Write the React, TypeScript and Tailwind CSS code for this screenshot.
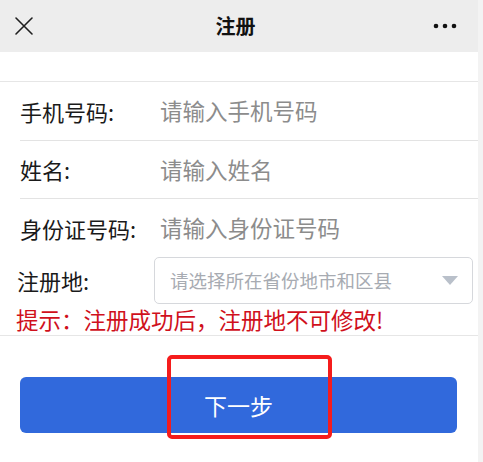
const font = { fontFamily: '"Noto Sans CJK SC", "Noto Sans", sans-serif' };

function CloseIcon() {
  return (
    <svg width="20" height="20" viewBox="0 0 20 20" fill="none">
      <path d="M2 2 L18 18 M18 2 L2 18" stroke="#1f1f1f" strokeWidth="1.6" strokeLinecap="round" />
    </svg>
  );
}

function MoreIcon() {
  return (
    <svg width="24" height="8" viewBox="0 0 24 8" fill="#111">
      <circle cx="3" cy="4" r="2.3" />
      <circle cx="12" cy="4" r="2.3" />
      <circle cx="21" cy="4" r="2.3" />
    </svg>
  );
}

interface FieldRowProps {
  label: string;
  placeholder: string;
  className: string;
}

function FieldRow({ label, placeholder, className }: FieldRowProps) {
  return (
    <div className={"ml-5 flex items-center " + className}>
      <span className="w-[140px] shrink-0 text-[22px] text-[#1a1a1a]">{label}</span>
      <input
        className="w-full bg-transparent text-[22.5px] text-[#1a1a1a] outline-none placeholder:text-[#8c8c8c]"
        placeholder={placeholder}
        style={font}
      />
    </div>
  );
}

export default function App() {
  return (
    <div className="flex h-[462px] w-[483px] overflow-hidden bg-white" style={font}>
      <div className="w-[478px] shrink-0">
        <div className="grid h-[52px] grid-cols-[1fr_auto_1fr] items-center bg-[#ededed] pl-[14px] pr-[21px]">
          <CloseIcon />
          <span className="text-[20px] font-semibold text-[#111]">注册</span>
          <div className="flex justify-end">
            <MoreIcon />
          </div>
        </div>
        <div className="h-[30px] border-b border-[#e6e6e6]" />

        <FieldRow label="手机号码:" placeholder="请输入手机号码" className="h-[59px] border-b border-[#e3e3e3]" />
        <FieldRow label="姓名:" placeholder="请输入姓名" className="h-[58px] border-b border-[#e3e3e3]" />
        <FieldRow label="身份证号码:" placeholder="请输入身份证号码" className="h-[58px]" />

        <div className="flex items-center pl-[17px]">
          <span className="w-[137px] shrink-0 text-[22px] text-[#1a1a1a]">注册地:</span>
          <div className="flex h-[47px] w-[319px] items-center justify-between rounded-[5px] border border-[#d6d8dc] pl-[15px] pr-[14px]">
            <span className="text-[18.5px] text-[#a7abb2]">请选择所在省份地市和区县</span>
            <svg width="16" height="9" viewBox="0 0 16 9">
              <path d="M0 0 H16 L8 9 Z" fill="#b9c0ca" />
            </svg>
          </div>
        </div>
        <div className="flex h-[32px] items-center border-b border-[#e6e6e6] pl-4 text-[22.5px] text-[#d0101c]">
          提示：注册成功后，注册地不可修改!
        </div>

        <div className="relative px-5 pt-[41px]">
          <button className="flex h-[56px] w-[437px] items-center justify-center rounded-[6px] bg-[#3169dc] text-[23px] text-white">
            下一步
          </button>
          <div className="absolute left-[167px] top-[19px] h-[84px] w-[165px] rounded-[5px] border-4 border-[#f51c1c]" />
        </div>
      </div>
      <div className="flex-1 bg-[#f3f3f3]" />
    </div>
  );
}
